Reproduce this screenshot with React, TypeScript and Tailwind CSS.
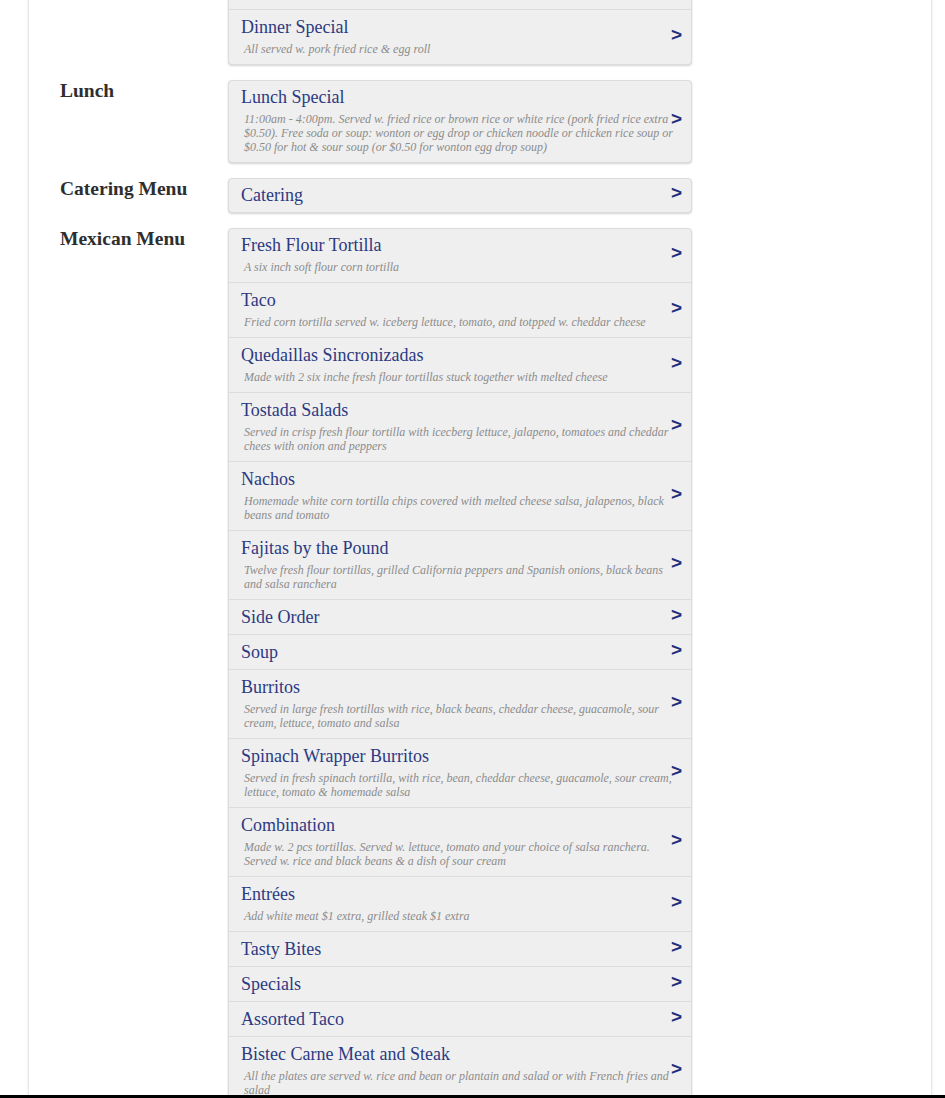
import React from 'react'

type Item = { title: string; desc?: string }
type Group = { label: string; items: Item[] }

const groups: Group[] = [
  {
    label: 'Dinner',
    items: [
      { title: 'Dinner Combination' },
      { title: 'Dinner Special', desc: 'All served w. pork fried rice & egg roll' },
    ],
  },
  {
    label: 'Lunch',
    items: [
      {
        title: 'Lunch Special',
        desc: '11:00am - 4:00pm. Served w. fried rice or brown rice or white rice (pork fried rice extra $0.50). Free soda or soup: wonton or egg drop or chicken noodle or chicken rice soup or $0.50 for hot & sour soup (or $0.50 for wonton egg drop soup)',
      },
    ],
  },
  { label: 'Catering Menu', items: [{ title: 'Catering' }] },
  {
    label: 'Mexican Menu',
    items: [
      { title: 'Fresh Flour Tortilla', desc: 'A six inch soft flour corn tortilla' },
      { title: 'Taco', desc: 'Fried corn tortilla served w. iceberg lettuce, tomato, and totpped w. cheddar cheese' },
      { title: 'Quedaillas Sincronizadas', desc: 'Made with 2 six inche fresh flour tortillas stuck together with melted cheese' },
      { title: 'Tostada Salads', desc: 'Served in crisp fresh flour tortilla with icecberg lettuce, jalapeno, tomatoes and cheddar chees with onion and peppers' },
      { title: 'Nachos', desc: 'Homemade white corn tortilla chips covered with melted cheese salsa, jalapenos, black beans and tomato' },
      { title: 'Fajitas by the Pound', desc: 'Twelve fresh flour tortillas, grilled California peppers and Spanish onions, black beans and salsa ranchera' },
      { title: 'Side Order' },
      { title: 'Soup' },
      { title: 'Burritos', desc: 'Served in large fresh tortillas with rice, black beans, cheddar cheese, guacamole, sour cream, lettuce, tomato and salsa' },
      { title: 'Spinach Wrapper Burritos', desc: 'Served in fresh spinach tortilla, with rice, bean, cheddar cheese, guacamole, sour cream, lettuce, tomato & homemade salsa' },
      { title: 'Combination', desc: 'Made w. 2 pcs tortillas. Served w. lettuce, tomato and your choice of salsa ranchera. Served w. rice and black beans & a dish of sour cream' },
      { title: 'Entrées', desc: 'Add white meat $1 extra, grilled steak $1 extra' },
      { title: 'Tasty Bites' },
      { title: 'Specials' },
      { title: 'Assorted Taco' },
      { title: 'Bistec Carne Meat and Steak', desc: 'All the plates are served w. rice and bean or plantain and salad or with French fries and salad' },
      { title: 'Chicken Plates' },
    ],
  },
]

function MenuRow({ item, first }: { item: Item; first: boolean }) {
  return (
    <a
      href="#"
      className={`flex items-center ${first ? '' : 'border-t border-[#dcdcdc]'}`}
    >
      <div className={`flex-1 pl-[12px] pb-[6px] ${first ? 'pt-[6px]' : 'pt-[7px]'}`}>
        <div className="text-[18px] leading-[21px] text-[#2c3a82]">{item.title}</div>
        {item.desc && (
          <p className="mt-[4px] mb-[2px] ml-[3px] text-[12px] leading-[14px] italic text-[#8c8c8c]">
            {item.desc}
          </p>
        )}
      </div>
      <span
        className="w-[10px] pl-[1px] -ml-[4px] mr-[11px] mb-[6px] text-[19px] leading-[21px] font-bold text-[#1f2e7c]"
        style={{ fontFamily: '"Liberation Sans", Arial, sans-serif' }}
      >
        &gt;
      </span>
    </a>
  )
}

export default function App() {
  return (
    <div className="min-h-[1098px] bg-white overflow-hidden" style={{ fontFamily: '"Liberation Serif", "Times New Roman", serif' }}>
      <div className="ml-[28px] w-[904px] min-h-[1140px] border-x border-[#e6e6e6] shadow-[0_0_3px_rgba(0,0,0,0.08)] -mt-[25px] pl-[31px]">
        <div className="flex flex-col gap-[15px]">
          {groups.map((g) => (
            <div key={g.label} className="flex">
              <h2 className="w-[168px] text-[19.5px] leading-[22px] font-bold text-[#2e2e2e]">{g.label}</h2>
              <div className="w-[464px] bg-[#efefef] border border-[#dcdcdc] rounded-[4px] shadow-[0_1px_2px_rgba(0,0,0,0.18)]">
                {g.items.map((it, i) => (
                  <MenuRow key={it.title} item={it} first={i === 0} />
                ))}
              </div>
            </div>
          ))}
        </div>
      </div>
      <div className="fixed bottom-0 left-0 right-0 h-[3px] bg-black" />
    </div>
  )
}
